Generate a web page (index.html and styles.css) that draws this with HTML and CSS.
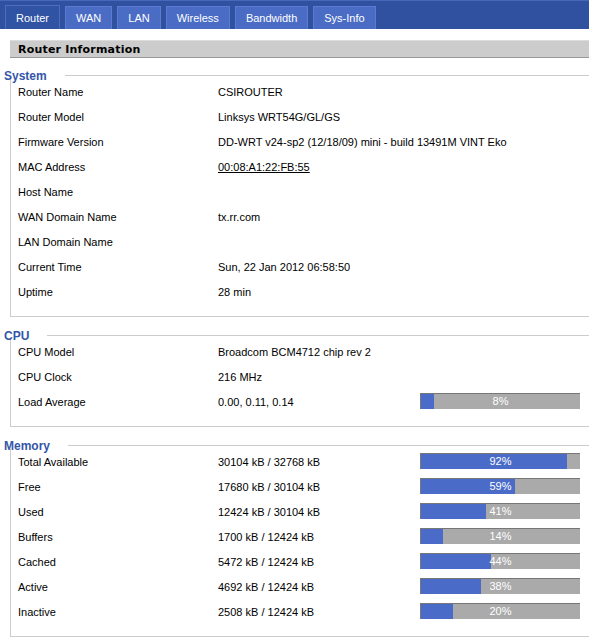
FILE: index.html
```html
<!DOCTYPE html>
<html lang="en">
<head>
    <meta charset="UTF-8">
    <title>Router Status</title>
    <link rel="stylesheet" href="styles.css">
</head>
<body>

<div class="tabs">
    <div class="tab active">Router</div>
    <div class="tab">WAN</div>
    <div class="tab">LAN</div>
    <div class="tab">Wireless</div>
    <div class="tab">Bandwidth</div>
    <div class="tab">Sys-Info</div>
</div>

<div class="page-title">Router Information</div>

<div class="section first">
    <div class="legend"><span>System</span><i class="legend-line"></i></div>
    <div class="box">
        <div class="row"><span>Router Name</span><span>CSIROUTER</span></div>
        <div class="row"><span>Router Model</span><span>Linksys WRT54G/GL/GS</span></div>
        <div class="row"><span>Firmware Version</span><span>DD-WRT v24-sp2 (12/18/09) mini - build 13491M VINT Eko</span></div>
        <div class="row"><span>MAC Address</span><span class="mac">00:08:A1:22:FB:55</span></div>
        <div class="row"><span>Host Name</span><span></span></div>
        <div class="row"><span>WAN Domain Name</span><span>tx.rr.com</span></div>
        <div class="row"><span>LAN Domain Name</span><span></span></div>
        <div class="row"><span>Current Time</span><span>Sun, 22 Jan 2012 06:58:50</span></div>
        <div class="row"><span>Uptime</span><span>28 min</span></div>
    </div>
</div>

<div class="section">
    <div class="legend"><span>CPU</span><i class="legend-line"></i></div>
    <div class="box">
        <div class="row"><span>CPU Model</span><span>Broadcom BCM4712 chip rev 2</span></div>
        <div class="row"><span>CPU Clock</span><span>216 MHz</span></div>
        <div class="row"><span>Load Average</span><span>0.00, 0.11, 0.14</span>
            <div class="bar"><div class="fill" style="width: 8%"></div><span>8%</span></div></div>
    </div>
</div>

<div class="section">
    <div class="legend"><span>Memory</span><i class="legend-line"></i></div>
    <div class="box">
        <div class="row"><span>Total Available</span><span>30104 kB / 32768 kB</span>
            <div class="bar"><div class="fill" style="width: 92%"></div><span>92%</span></div></div>
        <div class="row"><span>Free</span><span>17680 kB / 30104 kB</span>
            <div class="bar"><div class="fill" style="width: 59%"></div><span>59%</span></div></div>
        <div class="row"><span>Used</span><span>12424 kB / 30104 kB</span>
            <div class="bar"><div class="fill" style="width: 41%"></div><span>41%</span></div></div>
        <div class="row"><span>Buffers</span><span>1700 kB / 12424 kB</span>
            <div class="bar"><div class="fill" style="width: 14%"></div><span>14%</span></div></div>
        <div class="row"><span>Cached</span><span>5472 kB / 12424 kB</span>
            <div class="bar"><div class="fill" style="width: 44%"></div><span>44%</span></div></div>
        <div class="row"><span>Active</span><span>4692 kB / 12424 kB</span>
            <div class="bar"><div class="fill" style="width: 38%"></div><span>38%</span></div></div>
        <div class="row"><span>Inactive</span><span>2508 kB / 12424 kB</span>
            <div class="bar"><div class="fill" style="width: 20%"></div><span>20%</span></div></div>
    </div>
</div>

</body>
</html>
```

FILE: styles.css
```css
body {
    margin: 0;
    font-family: "Liberation Sans", Arial, sans-serif;
    font-size: 11px;
    color: #000;
    background: #fff;
    overflow: hidden;
}

.tabs {
    display: flex;
    align-items: flex-end;
    gap: 5px;
    height: 28px;
    padding-left: 5px;
    background: #2f51a0;
    border-top: 1px solid #4767b8;
}

.tab {
    height: 22px;
    line-height: 22px;
    padding: 0 10px;
    color: #fff;
    background: #4a6cc5;
    border: 1px solid #5b7bd0;
    border-bottom: none;
}

.tab.active {
    height: 23px;
    line-height: 24px;
    background: #3053a3;
    border-color: #4c6cbd;
}

.page-title {
    margin: 11px 0 0 10px;
    height: 16px;
    line-height: 17px;
    padding-left: 8px;
    background: #cccccc;
    border-top: 1px solid #dcdcdc;
    border-bottom: 1px solid #999;
    font-family: "DejaVu Sans", Verdana, sans-serif;
    font-weight: bold;
    font-size: 11px;
    letter-spacing: 0.2px;
}

.section {
    margin-top: 11px;
}

.section.first {
    margin-top: 10px;
}

.legend {
    display: flex;
    align-items: center;
    height: 11px;
    padding-top: 2px;
    margin: 0 0 -2px 4px;
    color: #3356a8;
    font-weight: bold;
    font-size: 12px;
}

.legend-line {
    flex: 1;
    height: 1px;
    margin-left: 18px;
    background: #cccccc;
}

.box {
    margin-left: 10px;
    padding: 0 0 12px 7px;
    border-left: 1px solid #cccccc;
    border-bottom: 1px solid #cccccc;
}

.row {
    display: grid;
    grid-template-columns: 200px 202px 160px;
    align-items: center;
    height: 25px;
    white-space: nowrap;
}

.mac {
    text-decoration: underline;
}

.bar {
    position: relative;
    box-sizing: border-box;
    height: 16px;
    margin-top: -2px;
    background: #aaaaaa;
    border-top: 1px solid #777;
    border-left: 1px solid #777;
}

.fill {
    height: 100%;
    background: #4a6cc8;
}

.bar span {
    position: absolute;
    top: 0;
    left: 0;
    right: 0;
    line-height: 15px;
    text-align: center;
    color: #fff;
}
```
